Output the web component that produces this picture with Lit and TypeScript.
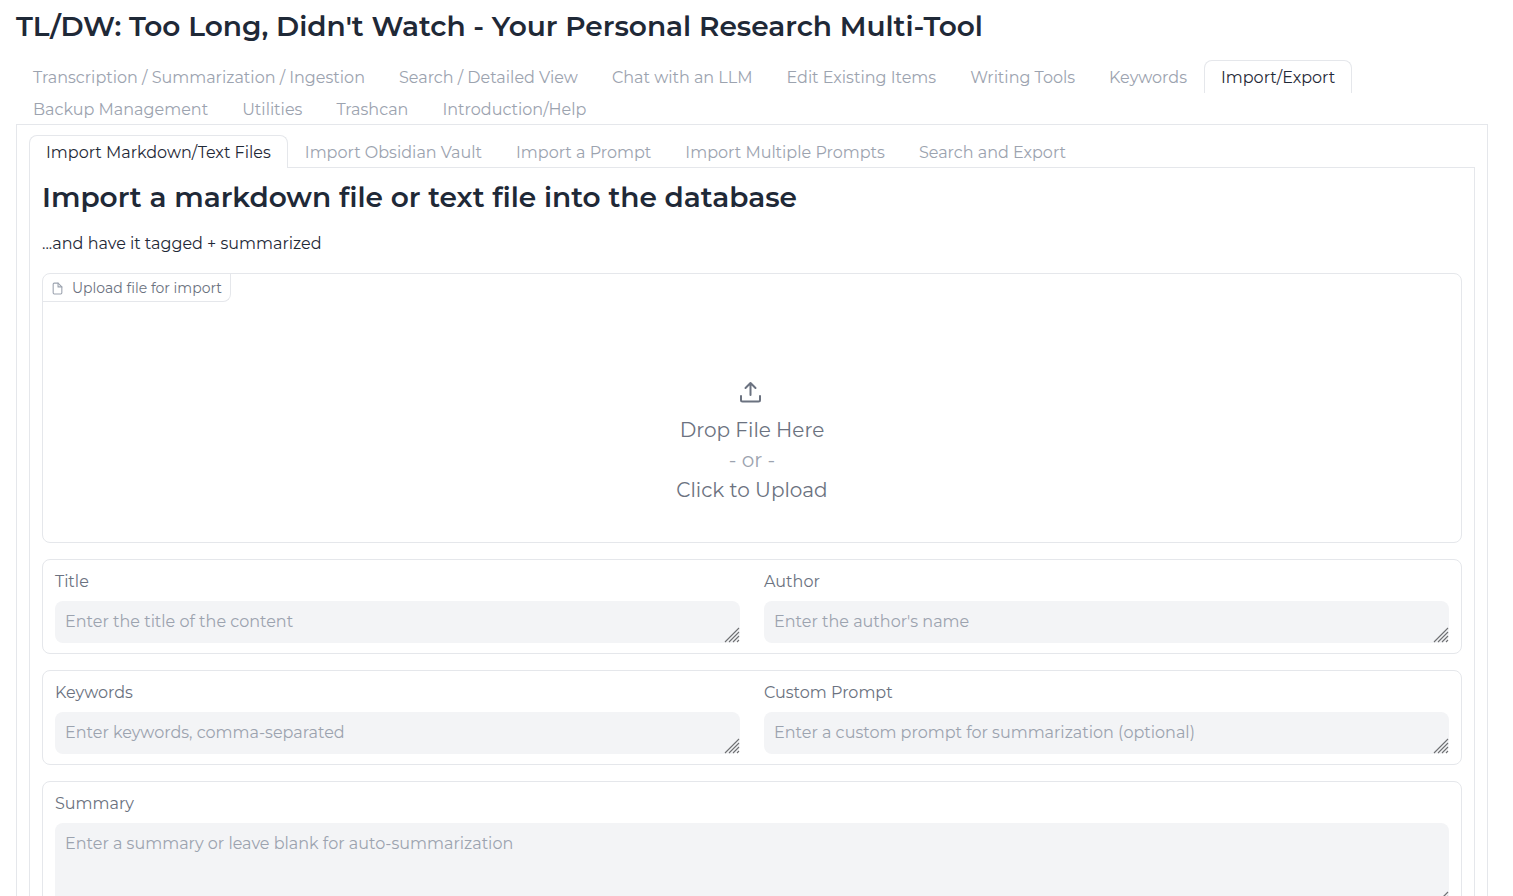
import { LitElement, html, css } from "lit";
import { customElement, property, state } from "lit/decorators.js";
import { classMap } from "lit/directives/class-map.js";

@customElement("tab-bar")
class TabBar extends LitElement {
  @property({ attribute: false }) tabs: string[] = [];
  @property() active = "";

  static styles = css`
    :host {
      display: block;
    }
    .bar {
      display: flex;
      flex-wrap: wrap;
      border-bottom: 1px solid #e5e7eb;
    }
    .tab {
      height: 33px;
      margin: 0 0 -1px;
      padding: 2px 16px 0;
      border: 1px solid transparent;
      border-bottom: 0;
      border-radius: 8px 8px 0 0;
      background: transparent;
      color: #9ca3af;
      font: inherit;
      line-height: 30px;
      white-space: nowrap;
      cursor: pointer;
    }
    .selected {
      border-color: #e5e7eb;
      background: #fff;
      color: #1f2937;
    }
  `;

  private pick(tab: string) {
    this.active = tab;
  }

  render() {
    return html`<div class="bar" role="tablist">
      ${this.tabs.map(
        (tab) => html`<button
          type="button"
          role="tab"
          aria-selected=${tab === this.active ? "true" : "false"}
          class=${classMap({ tab: true, selected: tab === this.active })}
          @click=${() => this.pick(tab)}
        >${tab}</button>`
      )}
    </div>`;
  }
}

@customElement("text-field")
class TextField extends LitElement {
  @property() label = "";
  @property() hint = "";
  @property({ type: Boolean }) tall = false;

  static styles = css`
    :host {
      display: block;
      flex: 1;
      min-width: 0;
    }
    .label {
      display: block;
      margin-bottom: 9px;
      color: #6b7280;
      line-height: 20px;
    }
    .box {
      position: relative;
      display: flex;
    }
    .input {
      box-sizing: border-box;
      width: 100%;
      height: 42px;
      padding: 10px;
      border: 0;
      border-radius: 8px;
      background: #f3f4f6;
      color: #1f2937;
      font: inherit;
      line-height: 22px;
      resize: none;
      overflow: hidden;
    }
    .tall {
      height: 84px;
    }
    .input::placeholder {
      color: #9ca3af;
      opacity: 1;
    }
    .grip {
      position: absolute;
      right: 0;
      bottom: 0;
      pointer-events: none;
    }
  `;

  render() {
    return html`
      <label class="label" for="input">${this.label}</label>
      <div class="box">
        <textarea
          id="input"
          rows="1"
          class=${classMap({ input: true, tall: this.tall })}
          placeholder=${this.hint}
        ></textarea>
        <svg class="grip" width="16" height="16" viewBox="0 0 16 16" fill="none" stroke="#6f7073" stroke-width="1.1" aria-hidden="true">
          <path d="M1 15 15 1M5 15 15 5M9 15 15 9M13 15 15 13" />
        </svg>
      </div>
    `;
  }
}

@customElement("app-root")
class AppRoot extends LitElement {
  @state() private sections = [
    "Transcription / Summarization / Ingestion",
    "Search / Detailed View",
    "Chat with an LLM",
    "Edit Existing Items",
    "Writing Tools",
    "Keywords",
    "Import/Export",
    "Backup Management",
    "Utilities",
    "Trashcan",
    "Introduction/Help",
  ];
  @state() private imports = [
    "Import Markdown/Text Files",
    "Import Obsidian Vault",
    "Import a Prompt",
    "Import Multiple Prompts",
    "Search and Export",
  ];

  static styles = css`
    :host {
      display: block;
      box-sizing: border-box;
      height: 100vh;
      overflow-y: auto;
      scrollbar-width: none;
      padding: 8px 25px 16px 16px;
      background: #fff;
      color: #1f2937;
      font-family: Montserrat, Inter, sans-serif;
      font-size: 16px;
      line-height: 24px;
    }
    .title {
      margin: 0;
      font-size: 28px;
      font-weight: 600;
      line-height: 36px;
    }
    .sections {
      margin-top: 16px;
    }
    .panel {
      border: 1px solid #e5e7eb;
      border-top: 0;
      padding: 10px 12px 12px;
    }
    .inner {
      padding: 11px 12px 12px;
    }
    .note {
      margin: 17px 0;
    }
    .stack {
      display: flex;
      flex-direction: column;
      gap: 16px;
    }
    .card {
      border: 1px solid #e5e7eb;
      border-radius: 8px;
    }
    .upload {
      position: relative;
      display: flex;
    }
    .tag {
      position: absolute;
      top: 0;
      left: 0;
      display: flex;
      align-items: center;
      gap: 8px;
      padding: 4px 8px 2px;
      border-right: 1px solid #e5e7eb;
      border-bottom: 1px solid #e5e7eb;
      border-radius: 8px 0 8px 0;
      color: #6b7280;
      font-size: 14px;
      line-height: 21px;
    }
    .page {
      color: #9ca3af;
    }
    .drop {
      display: flex;
      flex: 1;
      flex-direction: column;
      align-items: center;
      justify-content: center;
      min-height: 268px;
      margin: 0;
      padding: 69px 0 0;
      border: 0;
      border-radius: 8px;
      background: transparent;
      color: #6b7280;
      font: inherit;
      font-size: 20px;
      line-height: 30px;
      cursor: pointer;
    }
    .arrow {
      margin-bottom: 11px;
    }
    .or {
      color: #9ca3af;
    }
    .fields {
      display: flex;
      gap: 24px;
      padding: 12px 12px 10px;
    }
  `;

  render() {
    return html`
      <h1 class="title">TL/DW: Too Long, Didn't Watch - Your Personal Research Multi-Tool</h1>
      <tab-bar class="sections" .tabs=${this.sections} active="Import/Export"></tab-bar>
      <main class="panel">
        <tab-bar .tabs=${this.imports} active="Import Markdown/Text Files"></tab-bar>
        <section class="panel inner">
          <h1 class="title">Import a markdown file or text file into the database</h1>
          <p class="note">...and have it tagged + summarized</p>
          <div class="stack">
            <div class="card upload">
              <button class="drop" type="button">
                <svg class="arrow" width="24" height="24" viewBox="0 0 24 24" fill="none" stroke="currentColor" stroke-width="2" stroke-linecap="round" stroke-linejoin="round" aria-hidden="true">
                  <path d="M20 16v4a1.5 1.5 0 0 1-1.5 1.5h-16A1.500 1.500 0 0 1 1 20v-4" />
                  <path d="M15.500 8 10.500 3 5.500 8M10.500 3v12" />
                </svg>
                <span>Drop File Here</span>
                <span class="or">- or -</span>
                <span>Click to Upload</span>
              </button>
              <div class="tag">
                <svg class="page" width="13" height="13" viewBox="0 0 24 24" fill="none" stroke="currentColor" stroke-width="2" stroke-linecap="round" stroke-linejoin="round" aria-hidden="true">
                  <path d="M13 2H6a2 2 0 0 0-2 2v16a2 2 0 0 0 2 2h12a2 2 0 0 0 2-2V9z" />
                  <path d="M13 2v7h7" />
                </svg>
                <span>Upload file for import</span>
              </div>
            </div>
            <div class="card fields">
              <text-field label="Title" hint="Enter the title of the content"></text-field>
              <text-field label="Author" hint="Enter the author's name"></text-field>
            </div>
            <div class="card fields">
              <text-field label="Keywords" hint="Enter keywords, comma-separated"></text-field>
              <text-field label="Custom Prompt" hint="Enter a custom prompt for summarization (optional)"></text-field>
            </div>
            <div class="card fields">
              <text-field tall label="Summary" hint="Enter a summary or leave blank for auto-summarization"></text-field>
            </div>
          </div>
        </section>
      </main>
    `;
  }
}
